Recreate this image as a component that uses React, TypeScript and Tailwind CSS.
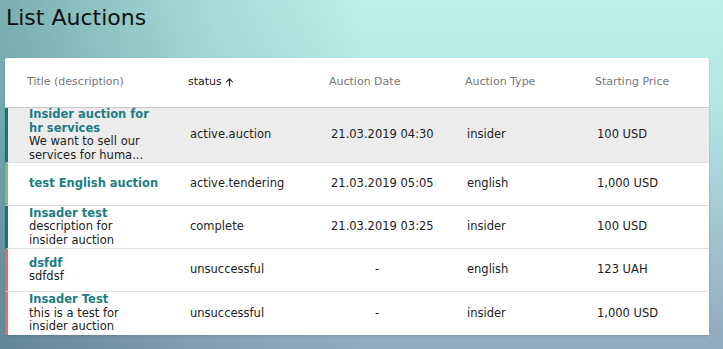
import React from 'react';

type Auction = {
    title: string;
    description?: string;
    status: string;
    date: string;
    type: string;
    price: string;
    accent: string;
};

// line breaks kept as in the list view (title column is narrow)
const auctions: Auction[] = [
    {
        title: 'Insider auction for\nhr services',
        description: 'We want to sell our\nservices for huma...',
        status: 'active.auction',
        date: '21.03.2019 04:30',
        type: 'insider',
        price: '100 USD',
        accent: 'border-l-[#17757a]',
    },
    {
        title: 'test English auction',
        status: 'active.tendering',
        date: '21.03.2019 05:05',
        type: 'english',
        price: '1,000 USD',
        accent: 'border-l-[#7cbf7a]',
    },
    {
        title: 'Insader test',
        description: 'description for\ninsider auction',
        status: 'complete',
        date: '21.03.2019 03:25',
        type: 'insider',
        price: '100 USD',
        accent: 'border-l-[#17757a]',
    },
    {
        title: 'dsfdf',
        description: 'sdfdsf',
        status: 'unsuccessful',
        date: '-',
        type: 'english',
        price: '123 UAH',
        accent: 'border-l-[#e56b6b]',
    },
    {
        title: 'Insader Test',
        description: 'this is a test for\ninsider auction',
        status: 'unsuccessful',
        date: '-',
        type: 'insider',
        price: '1,000 USD',
        accent: 'border-l-[#e56b6b]',
    },
];

const cols = 'grid grid-cols-[161px_141px_136px_130px_1fr] items-center';

export default function App() {
    return (
        <main className="min-h-[349px] h-[349px] overflow-hidden font-['DejaVu_Sans',sans-serif] bg-[linear-gradient(90deg,rgba(30,85,100,0.42)_0%,rgba(30,85,100,0.12)_30%,rgba(30,85,100,0)_50%),linear-gradient(180deg,#bdeeea_0%,#b2e8e3_30%,#a2c6cf_65%,#93a9bd_100%)]">
            <h1 className="pl-[6px] pt-[4px] text-[22px] leading-[28px] text-[#111]">List Auctions</h1>

            <div className="mt-[26px] ml-[5px] w-[704px] bg-white rounded-[2px] shadow-sm">
                {/* header */}
                <div className={`${cols} h-[50px] pl-[22px] border-b border-[#c8c8c8] text-[11px] text-[#777]`}>
                    <div>Title (description)</div>
                    <div className="flex items-center gap-[2px] text-[#222]">
                        status
                        <svg width="11" height="11" viewBox="0 0 24 24" fill="none" stroke="currentColor" strokeWidth="2.5">
                            <path d="M12 20V4M5 11l7-7 7 7" />
                        </svg>
                    </div>
                    <div>Auction Date</div>
                    <div>Auction Type</div>
                    <div>Starting Price</div>
                </div>

                {auctions.map((a, i) => (
                    <div
                        key={i}
                        className={`${cols} min-h-[43px] pl-[21px] border-l-[3px] ${a.accent} text-[11.5px] leading-[13.5px] text-[#222] ${i === 0 ? 'bg-[#ececec]' : 'bg-white'} ${i < auctions.length - 1 ? 'border-b border-b-[#dddddd]' : ''}`}
                    >
                        <div className="whitespace-pre-line">
                            <div className="font-semibold text-[#1d7d84]">{a.title}</div>
                            {a.description && <div>{a.description}</div>}
                        </div>
                        <div>{a.status}</div>
                        <div className={a.date === '-' ? 'pl-[44px]' : ''}>{a.date}</div>
                        <div>{a.type}</div>
                        <div>{a.price}</div>
                    </div>
                ))}
            </div>
        </main>
    );
}
